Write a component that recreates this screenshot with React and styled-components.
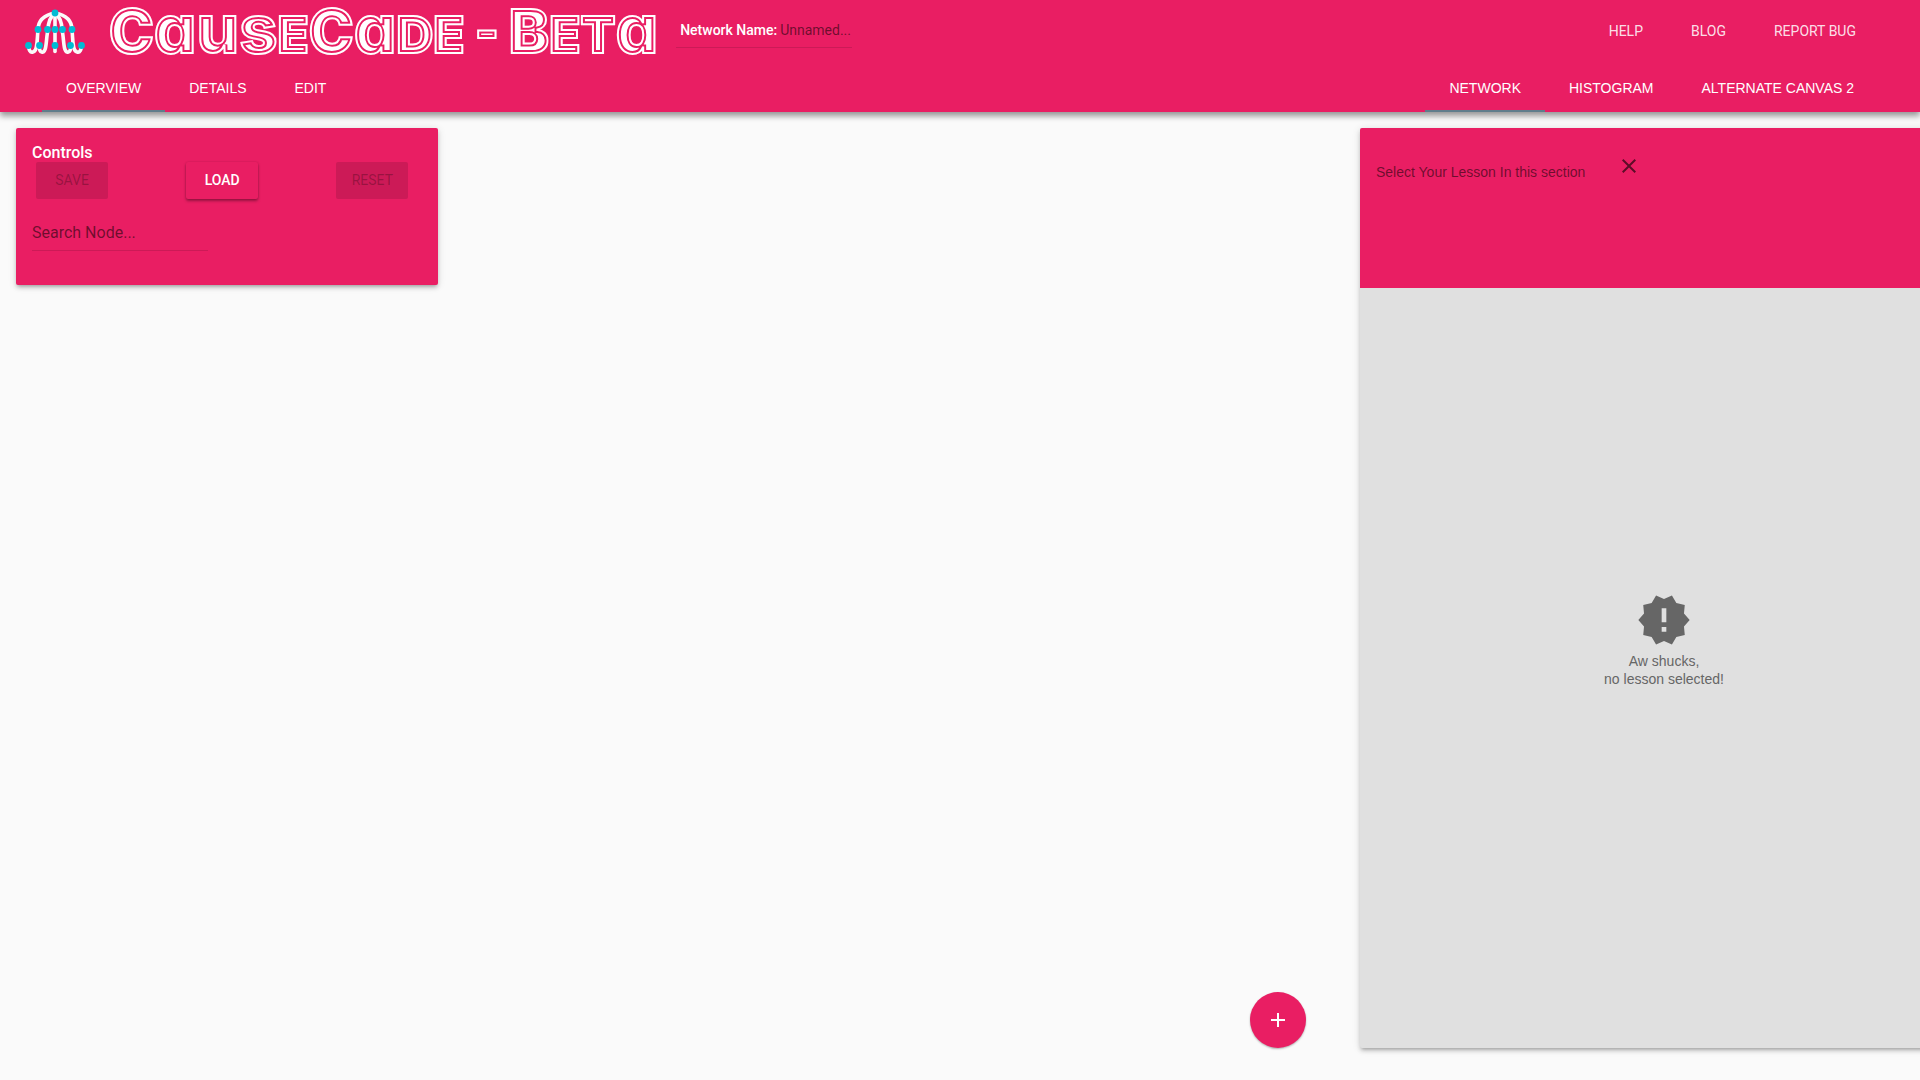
import React from "react";
import styled, { createGlobalStyle } from "styled-components";
import { MdAdd, MdClose, MdNewReleases } from "react-icons/md";

const pink = "#e91e63";
const sans = '"Liberation Sans", Arial, sans-serif';
const roboto = 'Roboto, "Liberation Sans", sans-serif';
const shadow =
  "0 3px 4px 0 rgba(0,0,0,.14), 0 3px 3px -2px rgba(0,0,0,.2), 0 1px 8px 0 rgba(0,0,0,.12)";

const GlobalStyle = createGlobalStyle`
  *, *::before, *::after { box-sizing: border-box; }
  body { margin: 0; background: #fafafa; font: 14px/18px ${sans}; }
  button, input { font: inherit; }
  h1, h2, p { margin: 0; }
`;

const Page = styled.div`
  display: flex;
  flex-direction: column;
  min-height: 100vh;
`;

const Header = styled.header`
  background: ${pink};
  color: #fff;
  box-shadow: 0 4px 6px 0 rgba(0, 0, 0, 0.4);
`;

const Brand = styled.div`
  display: flex;
  align-items: center;
  height: 62px;
  padding: 0 40px 0 23px;
`;

const Logo = styled.svg`
  flex: none;
  width: 64px;
  height: 64px;
`;

const Title = styled.h1`
  flex: none;
  min-width: 548px;
  padding-top: 2px;
  margin: 0 18px 0 22px;
  font: 900 60px/62px Inter, Lato, sans-serif;
  font-feature-settings: "cv11";
  white-space: pre;
  color: #fff;
`;

/* Neon-tube lettering: a white core, a pink gap and a white outline.
   Capitals, round lowercase and small capitals share one baseline. */
const glyphSize = { cap: "60px", round: "67px", small: "51px" };

const Glyphs = styled.span`
  position: relative;
  font-size: ${(p) => glyphSize[p.$kind]};
  font-weight: ${(p) => (p.$kind === "round" ? 800 : 900)};
  text-transform: ${(p) => (p.$kind === "small" ? "uppercase" : "none")};
  -webkit-text-stroke: 6px ${pink};

  &::after {
    content: attr(data-text) / "";
    position: absolute;
    left: 0;
    top: 0;
    color: transparent;
    line-height: normal;
    -webkit-text-stroke: 2px #fff;
  }
`;

const Field = styled.label`
  display: flex;
  align-items: center;
  gap: 3px;
  width: 176px;
  height: 34px;
  padding: 0 0 2px ${(p) => (p.$inset ? "4px" : "0")};
  border-bottom: 1px solid rgba(0, 0, 0, 0.12);
  font: 500 ${(p) => p.$size}px/20px ${roboto};
  white-space: nowrap;
`;

const TextInput = styled.input`
  flex: 1;
  min-width: 0;
  padding: 0;
  border: 0;
  outline: 0;
  background: none;
  font-weight: 400;
  color: rgba(0, 0, 0, 0.87);
  &::placeholder {
    color: rgba(0, 0, 0, 0.54);
    opacity: 1;
  }
`;

const Links = styled.nav`
  display: flex;
  margin-left: auto;
`;

const NavLink = styled.a`
  padding: 0 24px;
  font: 400 14px/20px ${roboto};
  color: rgba(255, 255, 255, 0.87);
  text-decoration: none;
`;

const TabBar = styled.div`
  display: flex;
  justify-content: space-between;
  padding: 0 42px;
`;

const TabGroup = styled.div`
  display: flex;
`;

const Tab = styled.button`
  height: 50px;
  padding: 4px 24px 0;
  border: 0;
  border-bottom: 2px solid ${(p) => (p.$active ? "#607d8b" : "transparent")};
  background: none;
  color: #fff;
  text-transform: uppercase;
  cursor: pointer;
`;

const Main = styled.main`
  flex: 1;
  display: grid;
  grid-template-columns: 22vw 1fr 560px;
  padding: 16px 0 32px 16px;
  overflow-x: clip;
`;

const Controls = styled.section`
  align-self: start;
  padding: 14px 16px 34px;
  border-radius: 2px;
  background: ${pink};
  box-shadow: ${shadow};
`;

const Heading = styled.h2`
  padding-top: 2px;
  font: 500 16px/18px ${roboto};
  color: #fff;
`;

const Buttons = styled.div`
  display: flex;
  justify-content: space-between;
  padding: 0 14px 0 4px;
  margin-bottom: 18px;
`;

const Button = styled.button`
  width: 72px;
  height: 37px;
  padding: 0 0 2px;
  border: 0;
  border-radius: 2px;
  background: ${pink};
  color: #fff;
  font: 500 14px/34px ${roboto};
  box-shadow: 0 2px 3px rgba(0, 0, 0, 0.35), 0 0 2px rgba(0, 0, 0, 0.15);
  cursor: pointer;
  &:disabled {
    background: rgba(0, 0, 0, 0.12);
    color: rgba(0, 0, 0, 0.26);
    font-weight: 400;
    box-shadow: none;
    cursor: default;
  }
`;

const Canvas = styled.section`
  display: flex;
  align-items: flex-end;
  justify-content: flex-end;
  padding-right: 54px;
`;

const AddButton = styled.button`
  display: grid;
  place-items: center;
  width: 56px;
  height: 56px;
  padding: 0;
  border: 0;
  border-radius: 50%;
  background: ${pink};
  color: #fff;
  box-shadow: 0 1px 2px rgba(0, 0, 0, 0.3);
  cursor: pointer;
`;

/* The drawer runs on past the window's right edge. */
const Lesson = styled.aside`
  display: flex;
  flex-direction: column;
  margin-right: -48px;
  border-radius: 2px;
  background: #e0e0e0;
  box-shadow: ${shadow};
`;

const LessonHead = styled.div`
  display: flex;
  align-items: flex-start;
  gap: 32px;
  height: 160px;
  padding: 26px 16px;
  border-radius: 2px 2px 0 0;
  background: ${pink};
  color: rgba(0, 0, 0, 0.54);
`;

const LessonHint = styled.p`
  padding-top: 9px;
`;

const CloseButton = styled.button`
  display: grid;
  padding: 0;
  border: 0;
  background: none;
  color: rgba(0, 0, 0, 0.6);
  cursor: pointer;
`;

const Empty = styled.div`
  flex: 1;
  display: flex;
  flex-direction: column;
  align-items: center;
  justify-content: center;
  gap: 4px;
  padding-bottom: 56px;
  color: #666;
  text-align: center;
`;

function JellyLogo() {
  return (
    <Logo viewBox="23 0 64 64" role="img" aria-label="CauseCade logo">
      <g fill="none" stroke="#fafafa" strokeWidth="3.6" strokeLinecap="round">
        <path d="M55 14C44 16 38 22 38 31C37 38 38 52 33 53C30 54 29 51 28.500 47" />
        <path d="M55 14C50 18 48 24 48 31C46 38 47 52 43 53C40 54 39 50 39.500 47" />
        <path d="M55 14V52.500" />
        <path d="M55 14C60 18 62 24 62 31C64 38 63 52 67 53C70 54 71 50 70.500 47" />
        <path d="M55 14C66 16 72 22 72 31C73 38 72 52 77 53C80 54 81 51 81.500 47" />
      </g>
      <g fill="#00bcd4">
        {[[55, 14], [38, 30.5], [47.5, 30.5], [55, 30.5], [62.5, 30.5], [72, 30.5],
          [28.5, 46.5], [39.5, 46.5], [55, 46.5], [70.5, 46.5], [81.5, 46.5]].map(([x, y]) => (
          <circle key={`${x}-${y}`} cx={x} cy={y} r="3.4" />
        ))}
      </g>
    </Logo>
  );
}

const titleRuns = [
  ["cap", "C"],
  ["round", "aus"],
  ["small", "e"],
  ["cap", "C"],
  ["round", "a"],
  ["small", "de - "],
  ["cap", "B"],
  ["small", "et"],
  ["round", "a"],
];

function Tabs({ items }) {
  return (
    <TabGroup role="tablist">
      {items.map((name, i) => (
        <Tab key={name} role="tab" aria-selected={i === 0} $active={i === 0}>
          {name}
        </Tab>
      ))}
    </TabGroup>
  );
}

export default function App() {
  return (
    <Page>
      <GlobalStyle />
      <Header>
        <Brand>
          <JellyLogo />
          <Title>
            {titleRuns.map(([kind, text], i) => (
              <Glyphs key={i} $kind={kind} data-text={text}>
                {text}
              </Glyphs>
            ))}
          </Title>
          <Field $size={14} $inset>
            Network Name:
            <TextInput placeholder="Unnamed..." />
          </Field>
          <Links>
            <NavLink href="#help">HELP</NavLink>
            <NavLink href="#blog">BLOG</NavLink>
            <NavLink href="#report">REPORT BUG</NavLink>
          </Links>
        </Brand>
        <TabBar>
          <Tabs items={["Overview", "Details", "Edit"]} />
          <Tabs items={["Network", "Histogram", "Alternate Canvas 2"]} />
        </TabBar>
      </Header>
      <Main>
        <Controls>
          <Heading>Controls</Heading>
          <Buttons>
            <Button disabled>SAVE</Button>
            <Button>LOAD</Button>
            <Button disabled>RESET</Button>
          </Buttons>
          <Field $size={16}>
            <TextInput aria-label="Search Node" placeholder="Search Node..." />
          </Field>
        </Controls>
        <Canvas aria-label="Network canvas">
          <AddButton aria-label="Add node">
            <MdAdd size={24} />
          </AddButton>
        </Canvas>
        <Lesson>
          <LessonHead>
            <LessonHint>Select Your Lesson In this section</LessonHint>
            <CloseButton aria-label="Close lesson">
              <MdClose size={24} />
            </CloseButton>
          </LessonHead>
          <Empty>
            <MdNewReleases size={56} />
            <p>
              Aw shucks,
              <br />
              no lesson selected!
            </p>
          </Empty>
        </Lesson>
      </Main>
    </Page>
  );
}
